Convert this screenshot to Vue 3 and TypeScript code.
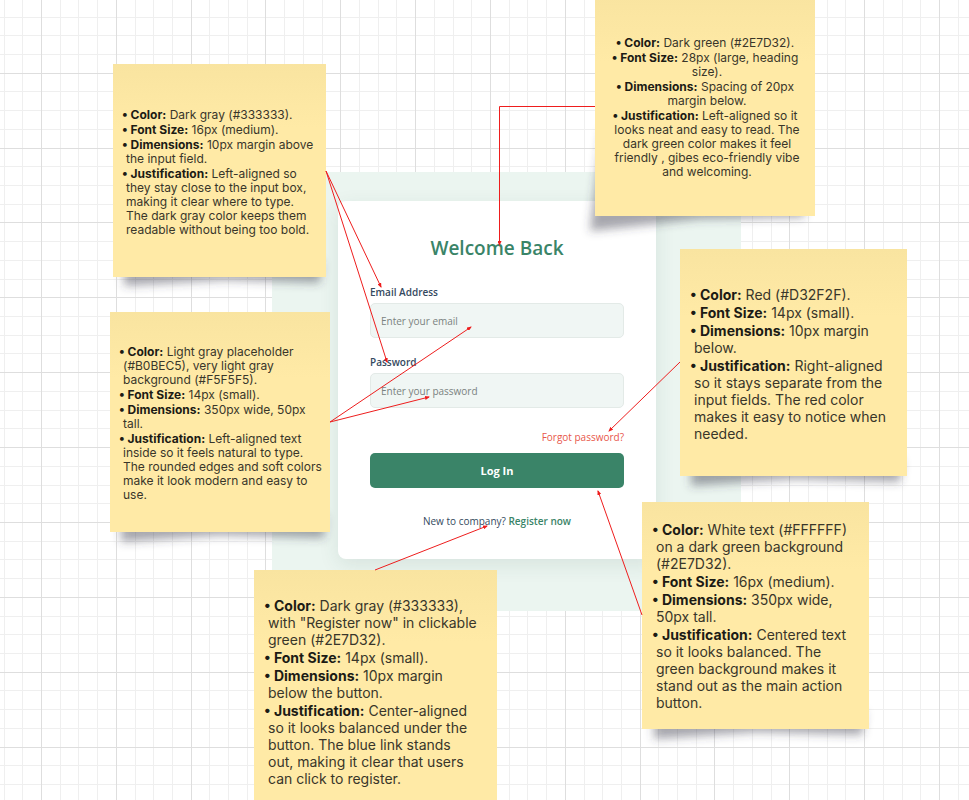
<script setup lang="ts">
import { onBeforeUnmount, onMounted, ref } from 'vue'

interface Item {
  term: string
  text: string
}

interface Note {
  id: string
  label: string
  items: Item[]
}

const notes: Note[] = [
  {
    id: 'note-labels',
    label: 'Field label notes',
    items: [
      { term: 'Color:', text: 'Dark gray (#333333).' },
      { term: 'Font Size:', text: '16px (medium).' },
      { term: 'Dimensions:', text: '10px margin above the input field.' },
      {
        term: 'Justification:',
        text: 'Left-aligned so they stay close to the input box, making it clear where to type. The dark gray color keeps them readable without being too bold.',
      },
    ],
  },
  {
    id: 'note-fields',
    label: 'Input field notes',
    items: [
      { term: 'Color:', text: 'Light gray placeholder (#B0BEC5), very light gray background (#F5F5F5).' },
      { term: 'Font Size:', text: '14px (small).' },
      { term: 'Dimensions:', text: '350px wide, 50px tall.' },
      {
        term: 'Justification:',
        text: 'Left-aligned text inside so it feels natural to type. The rounded edges and soft colors make it look modern and easy to use.',
      },
    ],
  },
  {
    id: 'note-heading',
    label: 'Heading notes',
    items: [
      { term: 'Color:', text: 'Dark green (#2E7D32).' },
      { term: 'Font Size:', text: '28px (large, heading size).' },
      { term: 'Dimensions:', text: 'Spacing of 20px margin below.' },
      {
        term: 'Justification:',
        text: 'Left-aligned so it looks neat and easy to read. The dark green color makes it feel friendly , gibes eco-friendly vibe and welcoming.',
      },
    ],
  },
  {
    id: 'note-forgot',
    label: 'Forgot password notes',
    items: [
      { term: 'Color:', text: 'Red (#D32F2F).' },
      { term: 'Font Size:', text: '14px (small).' },
      { term: 'Dimensions:', text: '10px margin below.' },
      {
        term: 'Justification:',
        text: 'Right-aligned so it stays separate from the input fields. The red color makes it easy to notice when needed.',
      },
    ],
  },
  {
    id: 'note-button',
    label: 'Log in button notes',
    items: [
      { term: 'Color:', text: 'White text (#FFFFFF) on a dark green background (#2E7D32).' },
      { term: 'Font Size:', text: '16px (medium).' },
      { term: 'Dimensions:', text: '350px wide, 50px tall.' },
      {
        term: 'Justification:',
        text: 'Centered text so it looks balanced. The green background makes it stand out as the main action button.',
      },
    ],
  },
  {
    id: 'note-register',
    label: 'Register link notes',
    items: [
      { term: 'Color:', text: 'Dark gray (#333333), with "Register now" in clickable green (#2E7D32).' },
      { term: 'Font Size:', text: '14px (small).' },
      { term: 'Dimensions:', text: '10px margin below the button.' },
      {
        term: 'Justification:',
        text: 'Center-aligned so it looks balanced under the button. The blue link stands out, making it clear that users can click to register.',
      },
    ],
  },
]

const connectors: string[] = [
  'M595 106.5H499.5V245',
  'M326 171L381 287',
  'M326 171L387 362',
  'M330 422L471 327',
  'M330 422L429 397',
  'M680 362L609 431',
  'M642 615L598 491',
  'M375 570L487 526',
]

const shadows: string[] = [
  '124,262 322,262 320,283 225,280 124,286',
  '121,516 326,516 324,538 220,535 121,542',
  '602,130 806,190 804,217 700,219 590,231',
  '691,460 902,460 900,482 795,479 691,486',
  '654,712 865,712 862,735 757,732 654,739',
]

const width = ref(window.innerWidth)
const height = ref(window.innerHeight)

function measure(): void {
  width.value = window.innerWidth
  height.value = window.innerHeight
}

onMounted(() => window.addEventListener('resize', measure))
onBeforeUnmount(() => window.removeEventListener('resize', measure))

// Every fourth grid line is a major one.
function gridPath(major: boolean): string {
  const parts: string[] = []
  for (let i = -4; i * 18 < Math.max(width.value, height.value); i++) {
    if ((i % 4 === 0) !== major) continue
    const x = Math.floor(41.5 + i * 18.708)
    const y = Math.floor(73.2 + i * 18.72)
    parts.push(`M${x} 0h1V${height.value}h-1z`, `M0 ${y}H${width.value}v1H0z`)
  }
  return parts.join('')
}

const email = ref('')
const password = ref('')
</script>

<template>
  <main class="board">
    <svg class="layer" aria-hidden="true">
      <path :d="gridPath(false)" fill="#efefef" />
      <path :d="gridPath(true)" fill="#dedede" />
    </svg>

    <section class="screen">
      <form class="card" @submit.prevent>
        <h1>Welcome Back</h1>
        <div class="field">
          <label for="email">Email Address</label>
          <input id="email" v-model="email" type="email" placeholder="Enter your email" />
        </div>
        <div class="field">
          <label for="password">Password</label>
          <input id="password" v-model="password" type="password" placeholder="Enter your password" />
        </div>
        <a class="forgot" href="#forgot">Forgot password?</a>
        <button type="submit">Log In</button>
        <p class="signup">New to company? <a href="#register">Register now</a></p>
      </form>
    </section>

    <svg class="layer" aria-hidden="true">
      <defs>
        <filter id="soft" x="-20%" y="-60%" width="140%" height="220%">
          <feGaussianBlur stdDeviation="5" />
        </filter>
      </defs>
      <polygon v-for="points in shadows" :key="points" :points="points" fill="#3c3c4a" fill-opacity="0.45" filter="url(#soft)" />
    </svg>

    <article v-for="note in notes" :key="note.id" class="note" :class="note.id" :aria-label="note.label">
      <ul>
        <li v-for="item in note.items" :key="item.term">
          <strong>• {{ item.term }}</strong> {{ item.text }}
        </li>
      </ul>
    </article>

    <svg class="layer" aria-hidden="true">
      <defs>
        <marker id="tip" viewBox="0 0 5 4" refX="4" refY="2" markerWidth="5" markerHeight="4" markerUnits="userSpaceOnUse" orient="auto">
          <path d="M0 0L5 2L0 4z" fill="#ee1d1d" />
        </marker>
      </defs>
      <path v-for="d in connectors" :key="d" :d="d" fill="none" stroke="#ee1d1d" marker-end="url(#tip)" />
    </svg>
  </main>
</template>

<style>
body {
  margin: 0;
}
</style>

<style scoped>
.board {
  position: relative;
  min-height: 100vh;
  overflow: hidden;
  background: #fff;
}

.layer {
  position: absolute;
  inset: 0;
  width: 100%;
  height: 100%;
  pointer-events: none;
}

.screen {
  position: absolute;
  left: 272px;
  top: 172px;
  box-sizing: border-box;
  width: 469px;
  padding: 29px 85px 52px 66px;
  background: #ebf5f0;
  font-family: 'Open Sans', 'Noto Sans', sans-serif;
  color: #34495e;
}

.card {
  display: flex;
  flex-direction: column;
  padding: 32px 32px 30px;
  border-radius: 8px;
  background: #fff;
  box-shadow: 0 6px 20px rgba(40, 80, 65, 0.1);
}

h1 {
  margin: 0 0 21px;
  font-size: 19px;
  font-weight: 600;
  line-height: 30px;
  text-align: center;
  color: #3a8468;
}

.field {
  display: flex;
  flex-direction: column;
  gap: 3px;
  margin-bottom: 16px;
}

label {
  font-size: 10px;
  font-weight: 600;
  line-height: 16px;
}

input {
  box-sizing: border-box;
  width: 100%;
  height: 35px;
  padding: 0 10px;
  border: 1px solid #e3eae7;
  border-radius: 5px;
  background: #f0f6f4;
  font: 10px 'Open Sans', 'Noto Sans', sans-serif;
  color: #34495e;
}

input::placeholder {
  color: #7a8280;
  opacity: 1;
}

.forgot {
  align-self: flex-end;
  margin: 5px 0 8px;
  font-size: 10px;
  line-height: 16px;
  text-decoration: none;
  color: #e8574b;
}

button {
  height: 35px;
  border: 0;
  border-radius: 5px;
  background: #3a8468;
  font: 700 11px 'Open Sans', 'Noto Sans', sans-serif;
  color: #fff;
}

.signup {
  margin: 25px 0 0;
  font-size: 10px;
  line-height: 16px;
  text-align: center;
}

.signup a {
  font-weight: 600;
  text-decoration: none;
  color: #3a8468;
}

.note {
  position: absolute;
  display: flex;
  align-items: center;
  box-sizing: border-box;
  padding: 0 14px 0 10px;
  background: linear-gradient(#f9e4a0, #ffeaa6 30%);
  font-family: Inter, 'Liberation Sans', sans-serif;
  font-size: 12px;
  line-height: 14px;
  color: #39362a;
}

.note ul {
  display: flex;
  flex: 1;
  flex-direction: column;
  gap: 1px;
  margin: 0;
  padding: 0 0 0 4px;
  list-style: none;
}

.note li {
  text-indent: -4px;
}

.note strong {
  font-weight: 700;
  color: #1c1b15;
}

.note-labels {
  left: 113px;
  top: 64px;
  width: 213px;
  height: 213px;
  padding: 3px 9px 0;
}

.note-fields {
  left: 110px;
  top: 312px;
  width: 220px;
  height: 220px;
  padding: 3px 6px 0 9px;
}

.note-heading {
  left: 595px;
  top: -4px;
  width: 220px;
  height: 220px;
  padding: 2px 14px 0;
  text-align: center;
}

.note-forgot,
.note-button,
.note-register {
  font-size: 14px;
  line-height: 17px;
}

.note-forgot {
  left: 680px;
  top: 249px;
  width: 227px;
  height: 227px;
  padding-top: 3px;
}

.note-button {
  left: 642px;
  top: 502px;
  width: 227px;
  height: 227px;
}

.note-register {
  left: 254px;
  top: 570px;
  width: 243px;
  height: 243px;
  padding-right: 20px;
}
</style>
